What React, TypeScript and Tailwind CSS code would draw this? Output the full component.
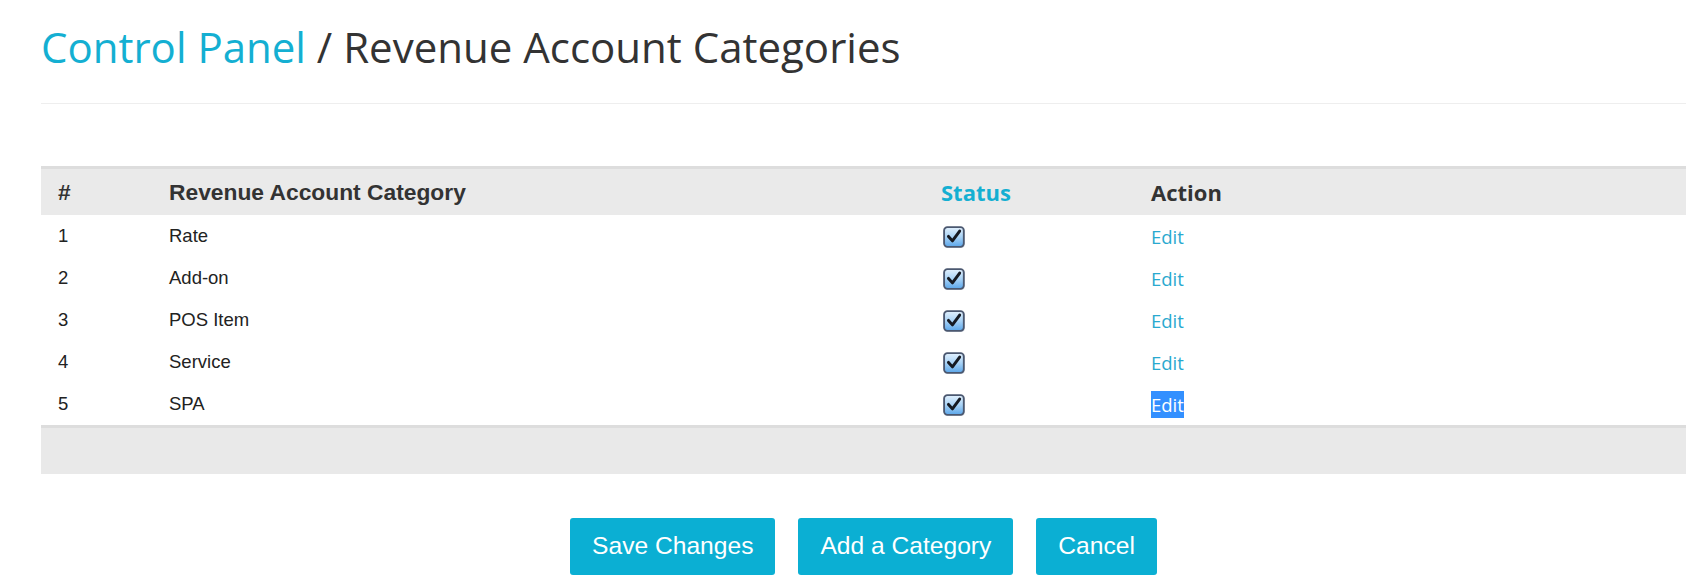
import React from "react";

const rows = [
  { n: 1, name: "Rate" },
  { n: 2, name: "Add-on" },
  { n: 3, name: "POS Item" },
  { n: 4, name: "Service" },
  { n: 5, name: "SPA", selected: true },
];

function CheckIcon() {
  return (
    <svg width="23" height="23" viewBox="0 0 21 21" className="block">
      <defs>
        <linearGradient id="cbg" x1="0" y1="0" x2="0" y2="1">
          <stop offset="0" stopColor="#e3f1fd" />
          <stop offset="0.5" stopColor="#a9d3f6" />
          <stop offset="1" stopColor="#5aa6ea" />
        </linearGradient>
      </defs>
      <rect x="1.8" y="1.8" width="18" height="18" rx="3" fill="#b9c2cc" opacity="0.6" />
      <rect x="1" y="1" width="18" height="18" rx="3" fill="url(#cbg)" stroke="#4b5870" strokeWidth="1.7" />
      <path d="M5 9.5 L8.6 13.6 L15.2 4.6" fill="none" stroke="#161a22" strokeWidth="2.7" strokeLinecap="round" strokeLinejoin="round" />
    </svg>
  );
}

export default function App() {
  const cell = "pl-[17px] flex items-center";
  return (
    <div className="w-[1688px] h-[582px] bg-white overflow-hidden">
      <div className="ml-[41px] mr-[2px]">
        <h1
          className="pt-[24px] text-[42px] leading-[46px] text-[#333333] font-normal"
          style={{ fontFamily: '"Open Sans", sans-serif' }}
        >
          <span className="text-[#14afd2]">Control Panel</span> / Revenue Account Categories
        </h1>
        <div className="mt-[33px] h-px bg-[#eeeeee]" />

        <div className="mt-[62px] border-t-[3px] border-[#dddddd]" style={{ fontFamily: '"Liberation Sans", Arial, sans-serif' }}>
          <div className="grid grid-cols-[111px_772px_210px_1fr] h-[46px] bg-[#eaeaea] text-[22.8px] font-bold text-[#333333]">
            <div className={cell}>#</div>
            <div className={cell}>Revenue Account Category</div>
            <div className={cell} style={{ fontFamily: '"Open Sans", sans-serif' }}>
              <span className="text-[22px] text-[#14afd2]">Status</span>
            </div>
            <div className={cell} style={{ fontFamily: '"Open Sans", sans-serif' }}>
              <span className="text-[22px]">Action</span>
            </div>
          </div>
          {rows.map((r) => (
            <div key={r.n} className="grid grid-cols-[111px_772px_210px_1fr] h-[42px] text-[18.5px] text-[#222222]">
              <div className={cell}>{r.n}</div>
              <div className={cell}>{r.name}</div>
              <div className={cell}>
                <div className="ml-[2px] mt-[2px]">
                  <CheckIcon />
                </div>
              </div>
              <div className={cell} style={{ fontFamily: '"Open Sans", sans-serif' }}>
                <span
                  className={
                    r.selected
                      ? "text-[18.5px] leading-[27px] bg-[#3390ff] text-white"
                      : "text-[18.5px] leading-[27px] text-[#2aa9cf]"
                  }
                >
                  Edit
                </span>
              </div>
            </div>
          ))}
          <div className="border-t-[3px] border-[#dddddd] h-[49px] bg-[#e9e9e9]" />
        </div>

        <div
          className="mt-[44px] flex justify-center gap-[23px]"
          style={{ fontFamily: '"Liberation Sans", Arial, sans-serif' }}
        >
          <button className="h-[57px] px-[22px] rounded-[3px] bg-[#0bafd3] text-white text-[24.6px]">Save Changes</button>
          <button className="h-[57px] px-[22px] rounded-[3px] bg-[#0bafd3] text-white text-[24.6px]">Add a Category</button>
          <button className="h-[57px] px-[22px] rounded-[3px] bg-[#0bafd3] text-white text-[24.6px]">Cancel</button>
        </div>
      </div>
    </div>
  );
}
